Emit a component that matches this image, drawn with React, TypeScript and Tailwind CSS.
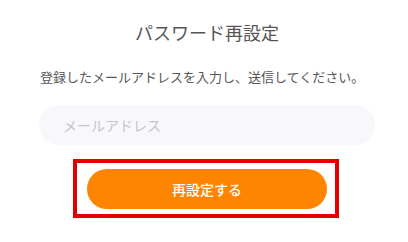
export default function App() {
  return (
    <main
      className="w-[408px] h-[242px] bg-white overflow-hidden pt-[19px]"
      style={{ fontFamily: '"Noto Sans CJK JP", "Noto Sans", sans-serif' }}
    >
      <div className="w-[336px] ml-[39px]">
        <h1 className="text-center text-[18px] leading-[26px] text-[#555] font-normal">
          パスワード再設定
        </h1>
        <p className="mt-[22px] text-[13px] leading-[20px] text-[#555] pl-px">
          登録したメールアドレスを入力し、送信してください。
        </p>
        <input
          type="email"
          placeholder="メールアドレス"
          className="mt-[18px] block w-full h-[40px] rounded-full bg-[#f8f8fc] px-[24px] text-[14px] text-[#555] placeholder:text-[#c4c4cc] outline-none"
        />
        <div className="relative w-[240px] mx-auto mt-[24px]">
          <button className="w-full h-[40px] rounded-full bg-[#ff8500] text-white text-[14px] font-medium">
            再設定する
          </button>
          <div className="absolute -left-[14px] -right-[12px] -top-[10px] -bottom-[9px] border-[4px] border-[#e30000] pointer-events-none" />
        </div>
      </div>
    </main>
  );
}
